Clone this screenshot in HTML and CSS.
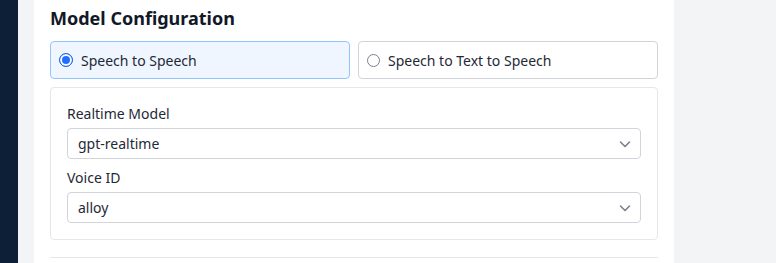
FILE: index.html
```html
<!DOCTYPE html>
<html>
  <head>
    <title>Model Configuration</title>
    <link rel="stylesheet" href="styles.css">
  </head>
  <body>
    <div class="sidebar"></div>
    <div class="main">
      <div class="panel">
        <h2 class="section-title">Model Configuration</h2>
        <div class="mode-row">
          <label class="mode-option selected">
            <span class="radio"></span>
            <span>Speech to Speech</span>
          </label>
          <label class="mode-option">
            <span class="radio"></span>
            <span>Speech to Text to Speech</span>
          </label>
        </div>
        <div class="settings-box">
          <div class="field">
            <div class="field-label">Realtime Model</div>
            <div class="select">
              <span>gpt-realtime</span>
              <svg class="chevron" width="14" height="14" viewBox="0 0 14 14"><path d="M2.5 5l4.5 4.5L11.5 5" fill="none" stroke="#7b8190" stroke-width="1.6" stroke-linecap="round" stroke-linejoin="round"/></svg>
            </div>
          </div>
          <div class="field">
            <div class="field-label">Voice ID</div>
            <div class="select">
              <span>alloy</span>
              <svg class="chevron" width="14" height="14" viewBox="0 0 14 14"><path d="M2.5 5l4.5 4.5L11.5 5" fill="none" stroke="#7b8190" stroke-width="1.6" stroke-linecap="round" stroke-linejoin="round"/></svg>
            </div>
          </div>
        </div>
        <div class="divider"></div>
      </div>
    </div>
  </body>
</html>
```

FILE: styles.css
```css
body {
  margin: 0;
  padding: 0;
  display: flex;
  height: 263px;
  overflow: hidden;
  font-family: "Noto Sans", "Open Sans", sans-serif;
  color: #111827;
  background-color: #f3f4f6;
}

.sidebar {
  width: 18px;
  background-color: #0d1f36;
}

.main {
  flex: 1;
  padding-left: 16px;
}

.panel {
  width: 608px;
  padding: 4px 16px 0 16px;
  background-color: #fff;
  height: 100%;
}

.section-title {
  margin: 0 0 9px 0;
  font-size: 18px;
  line-height: 28px;
  font-weight: 700;
}

.mode-row {
  display: flex;
  gap: 8px;
}

.mode-option {
  flex: 1;
  display: flex;
  align-items: center;
  gap: 8px;
  height: 36px;
  padding: 0 8px;
  border: 1px solid #d1d5db;
  border-radius: 4px;
  font-size: 14px;
  color: #1f2937;
}

.mode-option.selected {
  background-color: #eff6ff;
  border-color: #93c5fd;
}

.radio {
  width: 11px;
  height: 11px;
  border: 1px solid #7b8190;
  border-radius: 50%;
  background-color: #fff;
}

.selected .radio {
  width: 12px;
  height: 12px;
  border: 1px solid #2563eb;
  background-color: #1f6fff;
  box-shadow: inset 0 0 0 2px #fff;
}

.settings-box {
  margin-top: 8px;
  border: 1px solid #e5e7eb;
  border-radius: 4px;
  padding: 16px;
  display: flex;
  flex-direction: column;
  gap: 9px;
}

.field-label {
  font-size: 14px;
  line-height: 20px;
  margin-bottom: 4px;
  color: #1f2937;
}

.select {
  display: flex;
  align-items: center;
  justify-content: space-between;
  height: 29px;
  padding: 0 8px 0 10px;
  border: 1px solid #d1d5db;
  border-radius: 4px;
  font-size: 14px;
  color: #1f2937;
}

.divider {
  margin-top: 17px;
  border-top: 1px solid #e5e7eb;
}
```
